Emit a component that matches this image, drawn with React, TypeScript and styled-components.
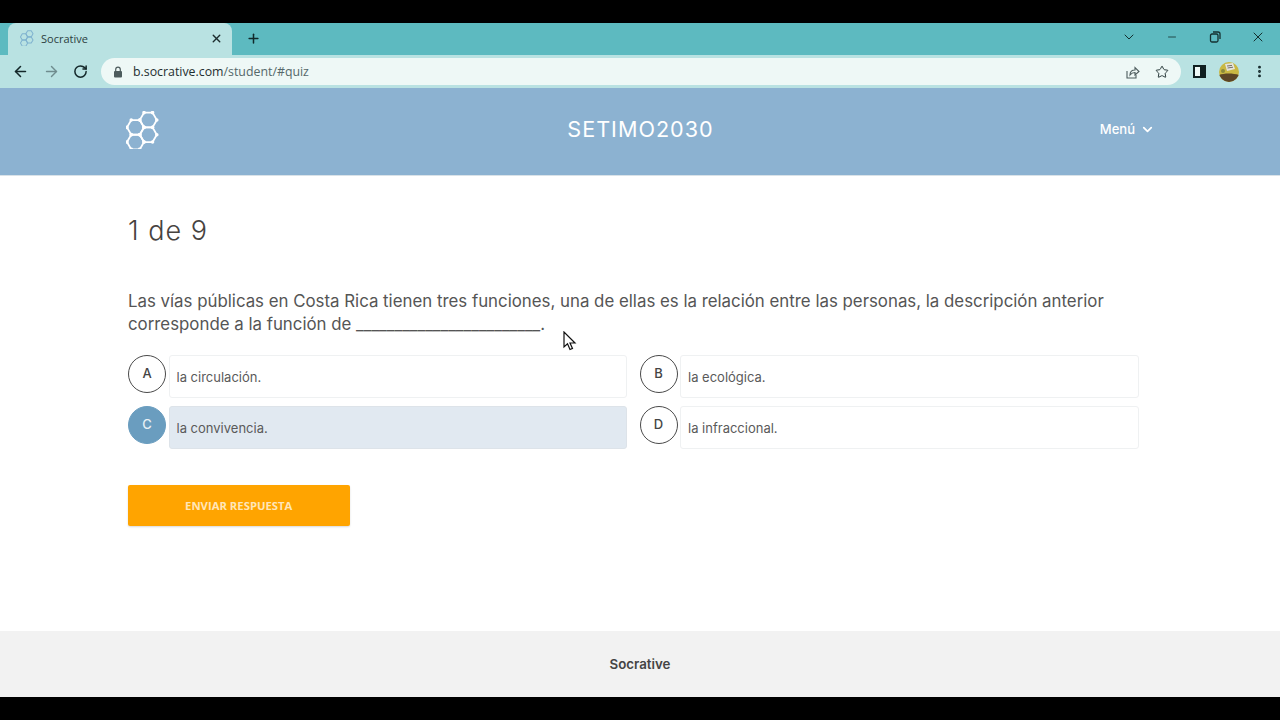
import styled, { createGlobalStyle } from "styled-components";
import { ArrowLeft, ArrowRight, RotateCw, X, Plus, Star, ChevronDown, Minus, MoreVertical } from "lucide-react";

const GlobalStyle = createGlobalStyle`
  html, body {
    margin: 0;
    padding: 0;
    background: #000;
    font-family: Inter, "Liberation Sans", sans-serif;
  }
`;

const Screen = styled.div`
  width: 1280px;
  height: 720px;
  background: #000;
  padding: 23px 0;
  box-sizing: border-box;
  display: flex;
  flex-direction: column;
  overflow: hidden;
`;

const TabBar = styled.div`
  height: 32px;
  background: #5dbac0;
  display: flex;
  align-items: flex-end;
  padding-left: 8px;
  color: #14302f;
`;

const Tab = styled.div`
  width: 224px;
  height: 32px;
  background: #b9e2e2;
  border-radius: 8px 8px 0 0;
  display: flex;
  align-items: center;
  padding: 0 9px 2px 12px;
  box-sizing: border-box;
  gap: 7px;
`;

const TabTitle = styled.span`
  flex: 1;
  font-family: "Open Sans", sans-serif;
  font-size: 11px;
  color: #2c3e40;
`;

const NewTab = styled.div`
  display: flex;
  margin: 0 0 9px 14px;
`;

const WindowControls = styled.div`
  margin-left: auto;
  margin-right: 1px;
  display: flex;
  align-items: center;
  align-self: flex-start;
  height: 27px;
`;

const WindowControl = styled.div`
  width: 43px;
  display: flex;
  justify-content: center;
`;

const RestoreIcon = styled.svg`
  width: 12px;
  height: 12px;
  fill: none;
  stroke: #14302f;
  stroke-width: 1.3;
`;

const Toolbar = styled.div`
  height: 33px;
  background: #b9e2e2;
  display: flex;
  align-items: center;
  padding-left: 12px;
`;

const NavButtons = styled.div`
  display: flex;
  align-items: center;
  gap: 13.5px;
  width: 89px;
`;

const Omnibox = styled.div`
  width: 1080px;
  height: 27px;
  background: #eef8f6;
  border-radius: 14px;
  display: flex;
  align-items: center;
  padding: 0 12px;
  box-sizing: border-box;
`;

const Url = styled.span`
  margin-left: 10px;
  flex: 1;
  font-family: "Open Sans", sans-serif;
  font-size: 12.35px;
  color: #1e2f30;
`;

const UrlRest = styled.span`
  color: #55686a;
`;

const OmniActions = styled.div`
  display: flex;
  align-items: center;
  gap: 15px;
`;

const ToolbarActions = styled.div`
  display: flex;
  align-items: center;
  margin-left: 12px;
  gap: 13px;
`;

const SidePanelIcon = styled.div`
  width: 5px;
  height: 9px;
  border: 2px solid #0f1f20;
  border-right-width: 6px;
  background: #eef8f6;
`;

const Avatar = styled.svg`
  width: 20px;
  height: 20px;
  border-radius: 50%;
`;

const Header = styled.header`
  height: 88px;
  background: #8cb2d1;
  border-bottom: 1px solid #d9e2e8;
  box-sizing: border-box;
  display: grid;
  grid-template-columns: 1fr auto 1fr;
  align-items: center;
  padding: 0 125px 5px 126px;
  color: #fff;
`;

const LogoMark = styled.svg<{ $small?: boolean }>`
  width: ${(p) => (p.$small ? "14px" : "33px")};
  height: ${(p) => (p.$small ? "16px" : "38px")};
  margin-top: ${(p) => (p.$small ? "0" : "2px")};
  flex: none;
  fill: none;
  stroke: ${(p) => (p.$small ? "#7fb2cf" : "#fff")};
  stroke-width: ${(p) => (p.$small ? "2.4" : "1.8")};
  stroke-linejoin: round;
`;

const Title = styled.div`
  font-size: 21.6px;
  letter-spacing: 1px;
  font-weight: 400;
`;

const MenuLink = styled.div`
  justify-self: end;
  display: flex;
  align-items: center;
  gap: 5px;
  font-size: 13px;
  font-weight: 500;
`;

const Main = styled.main`
  flex: 1;
  background: #fff;
  padding: 37px 128px 0;
  box-sizing: border-box;
`;

const Counter = styled.h1`
  margin: 0;
  font-size: 27px;
  line-height: 36px;
  font-weight: 300;
  color: #47433f;
  letter-spacing: 1px;
`;

const Question = styled.p`
  margin: 41px 0 0;
  width: 1010px;
  font-size: 16.84px;
  line-height: 23px;
  color: #555;
`;

const Answers = styled.div`
  margin-top: 19px;
  width: 1010.5px;
  display: grid;
  grid-template-columns: 499px 499px;
  column-gap: 12.5px;
  row-gap: 8px;
`;

const Answer = styled.div`
  display: flex;
  gap: 2.5px;
`;

const Badge = styled.div<{ $selected?: boolean }>`
  width: 38px;
  height: 38px;
  flex: none;
  border-radius: 50%;
  box-sizing: border-box;
  padding-bottom: 2px;
  border: 1px solid ${(p) => (p.$selected ? "#6a9dbf" : "#4a4a4a")};
  background: ${(p) => (p.$selected ? "#6a9dbf" : "#fff")};
  color: ${(p) => (p.$selected ? "#e8f1f6" : "#444")};
  display: flex;
  align-items: center;
  justify-content: center;
  font-size: 13px;
  font-weight: 500;
`;

const AnswerBox = styled.div<{ $selected?: boolean }>`
  flex: 1;
  height: 43px;
  box-sizing: border-box;
  border: 1px solid ${(p) => (p.$selected ? "#dde3e9" : "#eff1f2")};
  border-radius: 3px;
  background: ${(p) => (p.$selected ? "#e1e9f1" : "#fff")};
  display: flex;
  align-items: center;
  padding-left: 7px;
  font-size: 13px;
  color: #5a5a5a;
`;

const SubmitButton = styled.button`
  display: block;
  margin-top: 36px;
  width: 221.5px;
  height: 41px;
  border: none;
  border-radius: 2px;
  background: #ffa400;
  color: #ffe6b8;
  font-family: "Open Sans", sans-serif;
  font-size: 11.3px;
  font-weight: 700;
  box-shadow: 0 1px 2px rgba(0, 0, 0, 0.15);
`;

const Footer = styled.footer`
  height: 66px;
  background: #f2f2f2;
  display: flex;
  align-items: center;
  justify-content: center;
  font-size: 13.3px;
  font-weight: 600;
  color: #444;
`;

const Cursor = styled.svg`
  position: absolute;
  left: 563px;
  top: 331px;
  width: 14px;
  height: 20px;
`;

const answers = [
  { letter: "A", text: "la circulación." },
  { letter: "B", text: "la ecológica." },
  { letter: "C", text: "la convivencia.", selected: true },
  { letter: "D", text: "la infraccional." },
];

const hexCentres = [
  [22.3, 9],
  [22.3, 23.7],
  [9.5, 16.4],
  [9.5, 31],
];

function hexPoints(cx: number, cy: number) {
  const r = 8.5;
  const h = 7.36;
  return [
    [cx - r, cy],
    [cx - r / 2, cy - h],
    [cx + r / 2, cy - h],
    [cx + r, cy],
    [cx + r / 2, cy + h],
    [cx - r / 2, cy + h],
  ];
}

function HexLogo({ small }: { small?: boolean }) {
  return (
    <LogoMark viewBox="0 0 33 38" $small={small}>
      {hexCentres.map(([cx, cy]) => (
        <polygon key={`${cx}-${cy}`} points={hexPoints(cx, cy).map((p) => p.join(",")).join(" ")} />
      ))}
      {!small &&
        hexCentres.flatMap(([cx, cy]) =>
          hexPoints(cx, cy).map(([x, y]) => <circle key={`${cx}-${cy}-${x}-${y}`} cx={x} cy={y} r="0.9" fill="#fff" />)
        )}
    </LogoMark>
  );
}

export default function App() {
  return (
    <>
      <GlobalStyle />
      <Screen>
        <TabBar>
          <Tab>
            <HexLogo small />
            <TabTitle>Socrative</TabTitle>
            <X size={13} strokeWidth={2.6} color="#1b2b2c" />
          </Tab>
          <NewTab>
            <Plus size={15} strokeWidth={2.4} color="#10292a" />
          </NewTab>
          <WindowControls>
            <WindowControl>
              <ChevronDown size={16} strokeWidth={1.5} color="#14302f" />
            </WindowControl>
            <WindowControl>
              <Minus size={12} strokeWidth={1.6} color="#14302f" />
            </WindowControl>
            <WindowControl>
              <RestoreIcon viewBox="0 0 12 12">
                <rect x="1.5" y="3" width="7.5" height="8" rx="1.5" />
                <path d="M4 1 H9 A2 2 0 0 1 11 3 V8" />
              </RestoreIcon>
            </WindowControl>
            <WindowControl>
              <X size={16} strokeWidth={1.5} color="#14302f" />
            </WindowControl>
          </WindowControls>
        </TabBar>
        <Toolbar>
          <NavButtons>
            <ArrowLeft size={17} strokeWidth={2.2} color="#14282a" />
            <ArrowRight size={17} strokeWidth={2} color="#6f8c8e" />
            <RotateCw size={15} strokeWidth={2.4} color="#14282a" />
          </NavButtons>
          <Omnibox>
            <svg width="10" height="12" viewBox="0 0 10 12">
              <path d="M2.7 5 V3.4 a2.3 2.3 0 0 1 4.6 0 V5" fill="none" stroke="#4d5c5d" strokeWidth="1.2" />
              <rect x="1" y="5" width="8" height="6.5" rx="1" fill="#4d5c5d" />
            </svg>
            <Url>
              b.socrative.com<UrlRest>/student/#quiz</UrlRest>
            </Url>
            <OmniActions>
              <svg width="16" height="16" viewBox="0 0 16 16" fill="none" stroke="#4d5c5d" strokeWidth="1.1">
                <path d="M3 7 V14 H12 V11" />
                <path d="M6 11 C6 7.5 8 6 11 6 V3.5 L15 7.5 L11 11 V8.5 C9 8.5 7.5 9 6 11 Z" />
              </svg>
              <Star size={14} strokeWidth={1.6} color="#1e2f30" />
            </OmniActions>
          </Omnibox>
          <ToolbarActions>
            <SidePanelIcon />
            <Avatar viewBox="0 0 20 20">
              <rect width="20" height="20" fill="#c9b843" />
              <path d="M0 13 C5 11 14 11 20 13 V20 H0 Z" fill="#5c4526" />
              <path d="M6 2 L14 1 L16 7 L8 9 Z" fill="#e6e4dc" />
              <path d="M8 4 L13 3.4 M8.6 6 L14 5.2" stroke="#55504a" strokeWidth="0.8" />
              <circle cx="4" cy="9" r="2" fill="#8a8a3a" />
            </Avatar>
            <MoreVertical size={15} strokeWidth={2.6} color="#14282a" />
          </ToolbarActions>
        </Toolbar>
        <Header>
          <HexLogo />
          <Title>SETIMO2030</Title>
          <MenuLink>
            Menú
            <ChevronDown size={15} strokeWidth={2.8} />
          </MenuLink>
        </Header>
        <Main>
          <Counter>1 de 9</Counter>
          <Question>
            Las vías públicas en Costa Rica tienen tres funciones, una de ellas es la relación entre las personas, la
            descripción anterior corresponde a la función de ________________________.
          </Question>
          <Answers>
            {answers.map((a) => (
              <Answer key={a.letter}>
                <Badge $selected={a.selected}>{a.letter}</Badge>
                <AnswerBox $selected={a.selected}>{a.text}</AnswerBox>
              </Answer>
            ))}
          </Answers>
          <SubmitButton>ENVIAR RESPUESTA</SubmitButton>
        </Main>
        <Footer>Socrative</Footer>
        <Cursor viewBox="0 0 14 20">
          <path d="M1 1 L1 16 L4.5 12.8 L7 18.5 L9.5 17.4 L7 12 L12 12 Z" fill="#fff" stroke="#111" strokeWidth="1.2" />
        </Cursor>
      </Screen>
    </>
  );
}
